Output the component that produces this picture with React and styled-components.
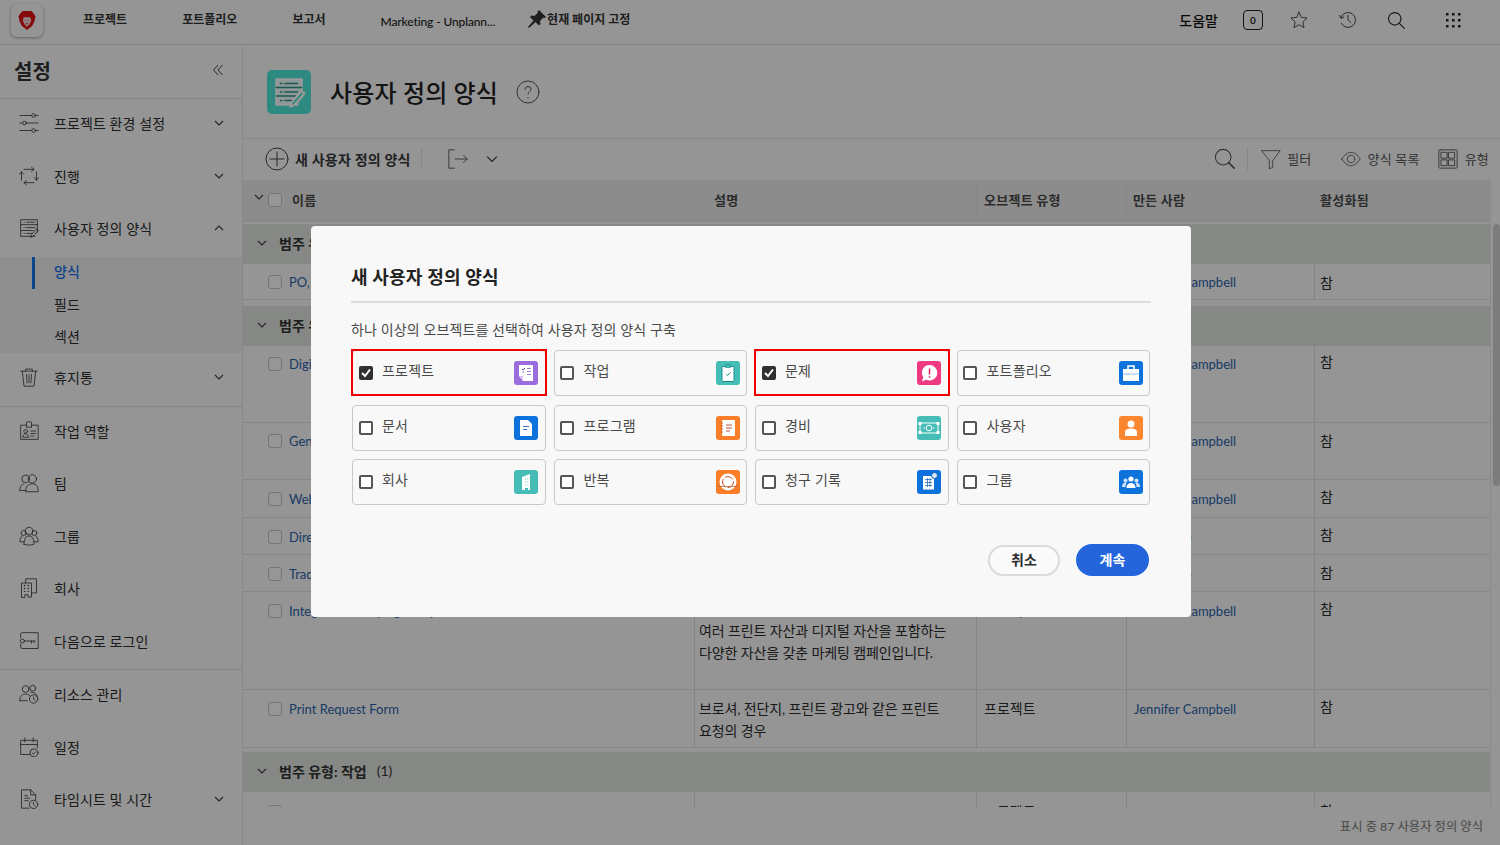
import styled, { createGlobalStyle } from 'styled-components';

const fontStack = "Lato, 'Noto Sans CJK KR', sans-serif";

const GlobalStyle = createGlobalStyle`
  html, body {
    margin: 0;
    height: 100%;
    overflow: hidden;
    background: #f8f8f8;
    color: #2c2c2c;
    font-family: ${fontStack};
  }
  * { box-sizing: border-box; }
`;

const Page = styled.div`
  height: 845px;
  display: flex;
  flex-direction: column;
  overflow: hidden;
`;

/* ---- top bar ---- */
const TopBar = styled.header`
  flex: 0 0 45px;
  display: flex;
  align-items: flex-start;
  padding-left: 11px;
  background: #f8f8f8;
  border-bottom: 1px solid #dcdcdc;
`;
const LogoBox = styled.div`
  width: 32px;
  height: 33px;
  margin-top: 4px;
  margin-right: 40px;
  display: flex;
  align-items: center;
  justify-content: center;
  background: #f8f8f8;
  border-radius: 6px;
  box-shadow: 0 1px 3px rgba(0, 0, 0, 0.35);
`;
const NavItem = styled.a`
  margin-top: ${(p) => p.$top || 11}px;
  margin-right: ${(p) => p.$gap || 55}px;
  font-size: 12px;
  line-height: 17px;
  font-weight: 700;
  color: #333;
  white-space: nowrap;
  display: flex;
  align-items: center;
`;
const NavText = styled(NavItem)`
  font-weight: 500;
  color: #222;
  letter-spacing: -0.12px;
`;
const TopRight = styled.div`
  margin-left: auto;
  display: flex;
  align-items: center;
  height: 40px;
  padding-right: 38px;
`;
const Help = styled.span`
  font-size: 14px;
  font-weight: 500;
  color: #111;
  margin-right: 25px;
`;
const Badge = styled.span`
  width: 20px;
  height: 20px;
  margin-right: 26px;
  border: 1px solid #222;
  border-radius: 4px;
  font-size: 10px;
  font-weight: 700;
  display: flex;
  align-items: center;
  justify-content: center;
`;
const TopIcon = styled.span`
  display: flex;
  margin-right: ${(p) => p.$gap}px;
`;

const Body = styled.div`
  flex: 1;
  min-height: 0;
  display: flex;
`;

/* ---- sidebar ---- */
const Sidebar = styled.aside`
  flex: 0 0 243px;
  border-right: 1px solid #e3e3e3;
  background: #f8f8f8;
  overflow: hidden;
`;
const SideHead = styled.div`
  height: 54px;
  padding: 0 18px 3px 14px;
  display: flex;
  align-items: center;
  justify-content: space-between;
  border-bottom: 1px solid #dfdfdf;
  h2 {
    margin: 0;
    font-size: 20px;
    font-weight: 700;
    color: #333;
  }
`;
const SideItem = styled.div`
  height: 52.5px;
  padding: 0 18px 4px 19px;
  display: flex;
  align-items: center;
  gap: 15px;
  font-size: 14px;
  color: #2c2c2c;
  letter-spacing: 0.1px;
  span { flex: 1; white-space: nowrap; }
`;
const SubList = styled.div`
  height: 96.500px;
  background: #eeeeee;
`;
const SubItem = styled.div`
  height: 32px;
  margin: 0 0 0.5px 32px;
  padding: 0 0 3px 19px;
  display: flex;
  align-items: center;
  font-size: 14px;
  letter-spacing: 0.1px;
  border-left: 3px solid ${(p) => (p.$active ? '#1473e6' : 'transparent')};
  color: ${(p) => (p.$active ? '#1473e6' : '#2c2c2c')};
  font-weight: ${(p) => (p.$active ? 500 : 400)};
`;
const SideRule = styled.div`
  height: 1px;
  background: #e0e0e0;
`;

/* ---- main column ---- */
const Main = styled.main`
  flex: 1;
  min-width: 0;
  display: flex;
  flex-direction: column;
`;
const PageHead = styled.div`
  flex: 0 0 94px;
  padding: 0 0 0 24px;
  display: flex;
  align-items: center;
  border-bottom: 1px solid #e3e3e3;
  h1 {
    margin: 0 18px 0 19px;
    font-size: 24px;
    font-weight: 500;
    color: #222;
    letter-spacing: 0.15px;
  }
`;
const FormBadge = styled.div`
  width: 44px;
  height: 44px;
  border-radius: 5px;
  background: #4ee6d8;
  display: flex;
  align-items: center;
  justify-content: center;
`;
const Toolbar = styled.div`
  flex: 0 0 41px;
  padding: 0 11px 2px 22px;
  display: flex;
  align-items: center;
`;
const NewButton = styled.div`
  display: flex;
  align-items: center;
  gap: 6px;
  font-size: 14px;
  font-weight: 700;
  color: #3a3a3a;
  letter-spacing: 0.22px;
`;
const ToolRule = styled.div`
  width: 1px;
  height: 22px;
  margin: ${(p) => p.$m};
  background: #dedede;
`;
const ToolRight = styled.div`
  margin-left: auto;
  display: flex;
  align-items: center;
`;
const ToolLabel = styled.div`
  display: flex;
  align-items: center;
  gap: ${(p) => p.$gap || 7}px;
  margin-right: ${(p) => p.$right || 0}px;
  font-size: 13px;
  letter-spacing: 0.2px;
  color: #555;
`;

/* ---- table ---- */
const TableWrap = styled.div`
  flex: 1;
  min-height: 0;
  display: flex;
  overflow: hidden;
`;
const Table = styled.div`
  flex: 1;
  min-width: 0;
`;
const Scrollbar = styled.div`
  flex: 0 0 10px;
  padding: 44px 0 0 2px;
  background: #f8f8f8;
  border-left: 1px solid #e8e8e8;
  i {
    display: block;
    width: 7px;
    height: 262px;
    border-radius: 4px;
    background: #cfcfcf;
  }
`;
const columns = '452px 282px 150px 188px 1fr';
const HeadRow = styled.div`
  height: 42px;
  margin-bottom: 2px;
  display: grid;
  grid-template-columns: ${columns};
  background: #e9e9e9;
  border-bottom: 1px solid #dedede;
`;
const HeadCell = styled.div`
  display: flex;
  align-items: center;
  padding-left: ${(p) => p.$pad}px;
  padding-bottom: 2px;
  font-size: 13px;
  font-weight: 700;
  letter-spacing: 0.25px;
  color: #4a4a4a;
  border-right: ${(p) => (p.$line ? '1px solid #e2e2e2' : 'none')};
`;
const GroupRow = styled.div`
  height: 40px;
  margin-top: ${(p) => p.$top || 0}px;
  padding: 0 0 3px 14px;
  display: flex;
  align-items: center;
  gap: 12px;
  background: #e0e3e0;
  font-size: 14px;
  font-weight: 700;
  color: #333;
  small { font-size: 14px; font-weight: 400; margin-left: -2px; }
`;
const Row = styled.div`
  height: ${(p) => p.$h}px;
  display: grid;
  grid-template-columns: ${columns};
  border-bottom: 1px solid #e2e2e2;
  font-size: 14px;
  color: #2c2c2c;
`;
const NameCell = styled.div`
  padding: ${(p) => p.$top}px 0 0 25px;
  display: flex;
  align-items: flex-start;
  gap: 7px;
  overflow: hidden;
  white-space: nowrap;
  border-right: 1px solid #dcdcdc;
`;
const RowCheck = styled.span`
  flex: none;
  width: 14px;
  height: 14px;
  border: 1px solid #c4c4c4;
  border-radius: 3px;
  background: #fafafa;
`;
const HeadCheck = styled(RowCheck)`
  margin: 0 10px 0 4px;
`;
const Link = styled.a`
  font-size: 13px;
  line-height: 18px;
  color: #2b63a8;
  white-space: nowrap;
`;
const NameLink = styled(Link)`
  margin-top: -2px;
`;
const Cell = styled.div`
  padding: ${(p) => p.$top}px 4px 0 ${(p) => p.$pad}px;
  line-height: 22px;
  letter-spacing: ${(p) => p.$track || 0}px;
  overflow: hidden;
  border-right: ${(p) => (p.$line ? '1px solid #dcdcdc' : 'none')};
`;
const Footer = styled.footer`
  flex: 0 0 38px;
  padding: 0 17px 0 0;
  display: flex;
  align-items: center;
  justify-content: flex-end;
  background: #f8f8f8;
  font-size: 12.3px;
  color: #777;
`;

/* ---- dialog ---- */
const Backdrop = styled.div`
  position: fixed;
  inset: 0;
  padding: 0 0 2px 2px;
  display: flex;
  align-items: center;
  justify-content: center;
  background: rgba(0, 0, 0, 0.4);
`;
const Dialog = styled.section`
  width: 880px;
  height: 391px;
  padding: 0 40px;
  background: #f8f8f8;
  border-radius: 4px;
`;
const DialogTitle = styled.h3`
  margin: 0;
  height: 77px;
  padding-top: 24px;
  display: flex;
  align-items: center;
  font-size: 18px;
  font-weight: 700;
  letter-spacing: 0.2px;
  color: #222;
  border-bottom: 2px solid #dcdcdc;
`;
const DialogHint = styled.p`
  margin: 17px 0 10px;
  font-size: 14px;
  line-height: 20px;
  letter-spacing: 0.12px;
  color: #4a4a4a;
`;
const TypeGrid = styled.div`
  margin: 0 1px;
  display: grid;
  grid-template-columns: repeat(4, 1fr);
  grid-auto-rows: 46px;
  column-gap: 8px;
  row-gap: 8.5px;
`;
const TypeCard = styled.label`
  position: relative;
  padding: 0 6.5px 0 5.5px;
  display: flex;
  align-items: center;
  background: #f8f8f8;
  border: 1px solid #c8c8c8;
  border-radius: 4px;
  &::after {
    content: ${(p) => (p.$marked ? "''" : 'none')};
    position: absolute;
    inset: -2px -2px -1px -2px;
    border: 2px solid #f00000;
  }
`;
const Box = styled.span`
  flex: none;
  width: 14px;
  height: 14px;
  display: flex;
  align-items: center;
  justify-content: center;
  border: 2px solid ${(p) => (p.$checked ? '#303030' : '#555')};
  border-radius: 2px;
  background: ${(p) => (p.$checked ? '#303030' : '#fff')};
`;
const TypeName = styled.span`
  flex: 1;
  margin: -6px 0 0 9.5px;
  font-size: 14px;
  color: #4a4a4a;
  letter-spacing: 0.2px;
`;
const TypeIcon = styled.span`
  flex: none;
  width: 24px;
  height: 24px;
  display: flex;
  border-radius: 3px;
  background: ${(p) => p.$bg};
`;
const DialogFoot = styled.div`
  margin-top: 39px;
  padding-right: 2px;
  display: flex;
  justify-content: flex-end;
  gap: 16px;
`;
const CancelButton = styled.button`
  width: 72px;
  height: 31px;
  margin-top: 1px;
  padding: 0 0 4px;
  background: #fafafa;
  border: 2px solid #dadada;
  border-radius: 16px;
  font: 700 14px ${fontStack};
  color: #2c2c2c;
`;
const ContinueButton = styled.button`
  width: 73px;
  height: 32px;
  padding: 0 0 2px;
  background: #2465dc;
  border: none;
  border-radius: 17px;
  font: 700 14px ${fontStack};
  color: #fff;
`;
const NudgeUp = styled.span`
  display: flex;
  margin-top: -6px;
`;
const Spacer = styled.span`
  width: ${(p) => p.$w}px;
`;

/* ---- drawings ---- */
function Line({ size = 20, color = '#3c3c3c', width = 1, children }) {
  return (
    <svg width={size} height={size} viewBox="0 0 24 24" fill="none" stroke={color} strokeWidth={width} strokeLinecap="round" strokeLinejoin="round" style={{ flex: 'none' }}>
      {children}
    </svg>
  );
}

function Chevron({ up, size = 10, color = '#3c3c3c' }) {
  return (
    <svg width={size} height={size} viewBox="0 0 10 10" fill="none" stroke={color} strokeWidth="1.1" style={{ flex: 'none' }}>
      <path d={up ? 'M1 7l4-4 4 4' : 'M1 3l4 4 4-4'} />
    </svg>
  );
}

const sideIcons = {
  sliders: (
    <>
      <path d="M1 3h14M20 3h3M1 12h3M9 12h14M1 21h14M20 21h3" />
      <circle cx="17.5" cy="3" r="2.2" /><circle cx="6.5" cy="12" r="2.2" /><circle cx="17.5" cy="21" r="2.2" />
    </>
  ),
  cycle: <path d="M6 4h12M15 1.5L18 4l-3 2.5M21 7v10M18.500 14l2.500 3 2.500-3M18 20H6M9 17.500L6 20l3 2.500M3 17V7M.5 10L3 7l2.500 3" />,
  form: (
    <>
      <path d="M19 22H2V2h20v15" />
      <path d="M2 8h20M2 15h15" />
      <path d="M6 5h.6M6 11.5h.6M6 18.5h.6M9 5h10M9 11.5h10M9 18.5h6" />
      <path d="M23 15l-6 7-3 1 1-3 6-7z" />
    </>
  ),
  trash: <path d="M2 5h20M8 5V2.5h8V5M4 5l2 18h12l2-18M9 9l.7 10M12 9v10M15 9l-.7 10" />,
  badge: (
    <>
      <path d="M9 5H2v17h21V5h-7" /><path d="M9 7V2a1 1 0 011-1h4a1 1 0 011 1v5z" />
      <circle cx="8" cy="12.5" r="2.2" /><path d="M4.5 19c0-5 7-5 7 0zM14 12h6M14 15h6M14 18h4" />
    </>
  ),
  team: (
    <>
      <circle cx="8" cy="7" r="4.5" /><circle cx="16" cy="7" r="5" />
      <path d="M1 21c0-5 2-7 5-8M8 22c0-6 3-9 8-9s7 3 7 9z" /><path d="M1 21h7" />
    </>
  ),
  group: (
    <>
      <circle cx="12" cy="6" r="4.5" /><circle cx="5.5" cy="8.5" r="3" /><circle cx="18.5" cy="8.5" r="3" />
      <path d="M6 22c0-7 2-10 6-10s6 3 6 10c-3 1.200-9 1.200-12 0zM6 19H1c0-4 1-6 3-7M18 19h5c0-4-1-6-3-7" />
    </>
  ),
  building: (
    <>
      <path d="M3 23V6h12v17h-4v-3H7v3zM8 6V1h13v17h-6" />
      <path d="M6.500 9h.3M11 9h.3M6.500 12.500h.3M11 12.500h.3M6.500 16h.3M11 16h.3" strokeWidth="1.6" />
    </>
  ),
  key: (
    <>
      <path d="M2 8V4a2 2 0 012-2h19v19H4a2 2 0 01-2-2v-3" />
      <circle cx="4" cy="12" r="2.500" /><path d="M6.500 12H19M15 12v2.500M18 12v2" />
    </>
  ),
  resource: (
    <>
      <circle cx="8" cy="6" r="4" /><circle cx="16.500" cy="5" r="3.500" />
      <path d="M1 20c0-6 3-8 7-8 2 0 4 .6 5 2M10 20H1M14 10c4 0 7 1 8 5" />
      <circle cx="17.500" cy="18" r="5" /><path d="M17.500 15.500V18l2 2" />
    </>
  ),
  calendar: (
    <>
      <path d="M13 21H2V4h20v9M2 9h20M7 1v5M17 1v5" />
      <circle cx="18" cy="19" r="4.800" /><path d="M15.800 19l1.600 1.600 2.800-3" />
    </>
  ),
  timesheet: (
    <>
      <path d="M12 23H3V1h11l6 6v6M14 1v6h6M7 8h3M7 11h6M7 14h4" />
      <circle cx="17.500" cy="18.500" r="5" /><path d="M17.500 16v2.500l2 2" />
    </>
  ),
  folder: <path d="M1 6h22v17H1z" />,
};

const Lion = () => (
  <svg width="18" height="19" viewBox="0 0 16 18">
    <path d="M4 0h8l2 2 2 3-1 5-2 4-5 4-5-4-2-4-1-5 2-3z" fill="#e01010" />
    <path d="M5 6h6l1 3-2 4-2 2-2-2-2-4z" fill="#f4dede" />
    <path d="M6.500 9h.8M8.700 9h.8M7 12h2" stroke="#c01010" strokeWidth="1" />
  </svg>
);

const glyphs = {
  project: (
    <>
      <path d="M5 4h14v16H9l-4-5z" fill="#fff" />
      <path d="M5 15h4v5z" fill="#d9c4f3" />
      <path d="M8 8l1 1 2-2" stroke="#5b3aa8" fill="none" />
      <path d="M13 7.500h4M13 10.500h4M13 13.500h4M8 11h2" stroke="#9c83d0" fill="none" />
    </>
  ),
  task: (
    <>
      <rect x="6" y="5.500" width="12" height="15" rx="1" fill="#fff" stroke="#1f8f88" />
      <path d="M9.500 3.500h5v3h-5z" fill="#46bdb6" stroke="#1f8f88" strokeWidth=".7" />
      <path d="M10 13l1.500 1.500 3-3" stroke="#1f8f88" fill="none" />
    </>
  ),
  issue: (
    <>
      <path d="M12.500 4a7.800 7.800 0 110 15.600c-1.200 0-2.300-.3-3.300-.8L5 20.500l1.300-4.200A7.800 7.800 0 0112.500 4z" fill="#fff" />
      <path d="M12.500 7.500v6M12.500 15.200v1.500" stroke="#e0245e" strokeWidth="1.500" />
    </>
  ),
  portfolio: (
    <>
      <path d="M4 8h16v12H4z" fill="#fff" />
      <path d="M9 8V5h6v3" stroke="#fff" strokeWidth="1.600" fill="none" />
      <path d="M4 13h16M9 13v1.500M15 13v1.500" stroke="#9cc3ee" fill="none" />
    </>
  ),
  doc: (
    <>
      <path d="M6 4h8l4 4v12H6z" fill="#fff" />
      <path d="M9 10.500h6M9 13.500h4" stroke="#3a72c0" fill="none" />
    </>
  ),
  program: (
    <>
      <rect x="6" y="4" width="13" height="16" rx="1" fill="#fff" />
      <path d="M5 7h2M5 10h2M5 13h2M5 16h2" stroke="#c96018" fill="none" />
      <path d="M10 9h6M10 12h6M10 15h4" stroke="#c0503a" fill="none" />
    </>
  ),
  expense: (
    <>
      <rect x="3" y="7" width="18" height="10" fill="none" stroke="#fff" />
      <rect x="1.500" y="6" width="3" height="3" fill="#fff" /><rect x="19.500" y="6" width="3" height="3" fill="#fff" />
      <rect x="1.500" y="15" width="3" height="3" fill="#fff" /><rect x="19.500" y="15" width="3" height="3" fill="#fff" />
      <circle cx="12" cy="12" r="2.800" fill="none" stroke="#fff" />
      <path d="M6.500 12h1.500M16 12h1.500" stroke="#fff" />
    </>
  ),
  user: (
    <>
      <circle cx="12" cy="8" r="3.500" fill="#fff" />
      <path d="M6 20v-4c0-2 2-3.500 6-3.500s6 1.500 6 3.500v4z" fill="#fff" />
    </>
  ),
  company: (
    <>
      <path d="M8 7l8-3v16h-2v-2h-3v2H8z" fill="#fff" />
      <path d="M11 9h.8M13.500 9h.8M11 12h.8M13.500 12h.8M11 15h.8M13.500 15h.8" stroke="#46bdb6" fill="none" />
    </>
  ),
  iteration: (
    <>
      <circle cx="12" cy="12" r="8.500" fill="#fff" />
      <circle cx="12" cy="12" r="5.500" fill="none" stroke="#c0502a" strokeDasharray="9 2" />
      <path d="M2 16.500h20" stroke="#b0562a" strokeWidth=".7" />
    </>
  ),
  billing: (
    <>
      <path d="M6 6h11v14l-1.500-1-1.500 1-1.500-1-1.500 1-1.500-1-1.500 1L6 19z" fill="#fff" />
      <path d="M8 9.500h7M8 12.500h7M8 15.500h7M10.500 8v9M13 8v9" stroke="#2a70c8" strokeWidth=".8" fill="none" />
      <circle cx="17.500" cy="5.500" r="3" fill="#dce8f6" stroke="#0c5cb8" />
    </>
  ),
  people: (
    <>
      <circle cx="12" cy="9" r="2.600" fill="#fff" /><circle cx="6.500" cy="10.500" r="2" fill="#cfe2f7" /><circle cx="17.500" cy="10.500" r="2" fill="#cfe2f7" />
      <path d="M7.500 18c0-3.500 2-5 4.500-5s4.500 1.500 4.500 5z" fill="#fff" />
      <path d="M3 17c0-3 1.500-4.500 3.500-4.500 1 0 1.500.3 1.500.3-1 1-1.500 2.500-1.500 4.200zM21 17c0-3-1.500-4.500-3.500-4.500-1 0-1.500.3-1.500.3 1 1 1.500 2.500 1.500 4.200z" fill="#cfe2f7" />
    </>
  ),
};

const sideTop = [
  { icon: 'sliders', label: '프로젝트 환경 설정', chevron: true },
  { icon: 'cycle', label: '진행', chevron: true },
  { icon: 'form', label: '사용자 정의 양식', chevron: true, up: true },
];
const sideMiddle = [
  { icon: 'badge', label: '작업 역할' },
  { icon: 'team', label: '팀' },
  { icon: 'group', label: '그룹' },
  { icon: 'building', label: '회사' },
  { icon: 'key', label: '다음으로 로그인' },
];
const sideBottom = [
  { icon: 'resource', label: '리소스 관리' },
  { icon: 'calendar', label: '일정' },
  { icon: 'timesheet', label: '타임시트 및 시간', chevron: true },
  { icon: 'folder', label: '' },
];

const types = [
  { label: '프로젝트', glyph: 'project', bg: '#9b6cdd', checked: true },
  { label: '작업', glyph: 'task', bg: '#45bdb6' },
  { label: '문제', glyph: 'issue', bg: '#ee3a80', checked: true },
  { label: '포트폴리오', glyph: 'portfolio', bg: '#0e72dc' },
  { label: '문서', glyph: 'doc', bg: '#0e72dc' },
  { label: '프로그램', glyph: 'program', bg: '#fa7d28' },
  { label: '경비', glyph: 'expense', bg: '#45bdb6' },
  { label: '사용자', glyph: 'user', bg: '#fa8630' },
  { label: '회사', glyph: 'company', bg: '#45bdb6' },
  { label: '반복', glyph: 'iteration', bg: '#fa7d28' },
  { label: '청구 기록', glyph: 'billing', bg: '#0e72dc' },
  { label: '그룹', glyph: 'people', bg: '#0e72dc' },
];

const groupA = [
  { h: 77, top: 11, act: 5, name: 'Digital Asset Request', by: 'Jennifer Campbell' },
  { h: 57, top: 11, act: 7, name: 'General Creative Request', by: 'Jennifer Campbell' },
  { h: 38, top: 12, act: 6, name: 'Web Page Request', by: 'Jennifer Campbell' },
  { h: 37, top: 12, act: 6, name: 'Direct Mail Request', by: 'Sam Rizzo' },
  { h: 37, top: 12, act: 7, name: 'Trade Show Request', by: 'Sam Rizzo' },
  {
    h: 98,
    top: 12,
    act: 6,
    descTop: 6,
    name: 'Integrated Campaign Request',
    by: 'Jennifer Campbell',
    desc: ['인쇄물, 웹 페이지, 소셜 미디어 광고 등', '여러 프린트 자산과 디지털 자산을 포함하는', '다양한 자산을 갖춘 마케팅 캠페인입니다.'],
  },
  { h: 58, top: 12, act: 6, descTop: 8, name: 'Print Request Form', by: 'Jennifer Campbell', desc: ['브로셔, 전단지, 프린트 광고와 같은 프린트', '요청의 경우'] },
];

function SideRow({ item }) {
  return (
    <SideItem>
      <Line size={20}>{sideIcons[item.icon]}</Line>
      <span>{item.label}</span>
      {item.chevron && <Chevron up={item.up} />}
    </SideItem>
  );
}

function DataRow({ row }) {
  return (
    <Row $h={row.h}>
      <NameCell $top={row.top}>
        <RowCheck />
        <NameLink>{row.name}</NameLink>
      </NameCell>
      <Cell $pad={4} $top={row.descTop || 8} $track={-0.12} $line>
        {(row.desc || []).map((text) => (
          <div key={text}>{text}</div>
        ))}
      </Cell>
      <Cell $pad={7} $top={row.top - 4} $line>
        프로젝트
      </Cell>
      <Cell $pad={7} $top={row.top - 4} $line>
        <Link>{row.by}</Link>
      </Cell>
      <Cell $pad={5} $top={row.act}>
        참
      </Cell>
    </Row>
  );
}

export default function App() {
  return (
    <>
      <GlobalStyle />
      <Page>
        <TopBar>
          <LogoBox>
            <Lion />
          </LogoBox>
          <NavItem>프로젝트</NavItem>
          <NavItem>포트폴리오</NavItem>
          <NavItem>보고서</NavItem>
          <NavText $top={13} $gap={32}>
            Marketing - Unplann...
          </NavText>
          <NavItem $top={9}>
            <svg width="20" height="20" viewBox="0 0 20 20">
              <path d="M12 1l7 7-1.500 1-1-.5-3.500 3.500.5 3-1.500 1.500-3.500-3.500L2 19l-1-1 5.500-6.500L3 8l1.500-1.500 3 .5L11 3.500l-.5-1z" fill="#333" />
            </svg>
            현재 페이지 고정
          </NavItem>
          <TopRight>
            <Help>도움말</Help>
            <Badge>0</Badge>
            <TopIcon $gap={29}>
              <Line size={20} width={1.1} color="#444">
                <path d="M12 2.500l2.900 6.300 6.800.8-5 4.700 1.300 6.800-6-3.400-6 3.400 1.300-6.800-5-4.700 6.800-.8z" />
              </Line>
            </TopIcon>
            <TopIcon $gap={28}>
              <Line size={20} width={1.2} color="#444">
                <path d="M3.500 9a9 9 0 11.500 7M2 6.500L3.500 10 7 8.500M12 6.500V12l3.500 3" />
              </Line>
            </TopIcon>
            <TopIcon $gap={38}>
              <Line size={20} width={1.5} color="#333">
                <circle cx="10.500" cy="10.500" r="7.500" />
                <path d="M16 16l6 6" />
              </Line>
            </TopIcon>
            <svg width="18" height="18" viewBox="0 0 18 18" fill="#222">
              {[2, 8, 14].flatMap((y) => [2, 8, 14].map((x) => <rect key={`${x}-${y}`} x={x} y={y} width="2.500" height="2.500" />))}
            </svg>
          </TopRight>
        </TopBar>
        <Body>
          <Sidebar>
            <SideHead>
              <h2>설정</h2>
              <svg width="12" height="12" viewBox="0 0 12 12" fill="none" stroke="#444" strokeWidth="1">
                <path d="M6 1L1.500 6 6 11M10.500 1L6 6l4.500 5" />
              </svg>
            </SideHead>
            {sideTop.map((item) => (
              <SideRow key={item.label} item={item} />
            ))}
            <SubList>
              <SubItem $active>양식</SubItem>
              <SubItem>필드</SubItem>
              <SubItem>섹션</SubItem>
            </SubList>
            <SideRow item={{ icon: 'trash', label: '휴지통', chevron: true }} />
            <SideRule />
            {sideMiddle.map((item) => (
              <SideRow key={item.label} item={item} />
            ))}
            <SideRule />
            {sideBottom.map((item) => (
              <SideRow key={item.icon} item={item} />
            ))}
          </Sidebar>
          <Main>
            <PageHead>
              <FormBadge>
                <Line size={34} color="#fff" width={1.5}>
                  <path d="M18 21H3V3h18v13" fill="#fff" fillOpacity=".9" />
                  <path d="M3 8.800h18M3 14.800h14M6 6h1M6 12h1M6 18h1M9 6h9M9 12h9M9 18h5" stroke="#2f8f86" strokeWidth="1" />
                  <path d="M23 13l-7 8-3 1.500.8-3.200 7-8z" stroke="#fff" fill="#4ee6d8" />
                </Line>
              </FormBadge>
              <h1>사용자 정의 양식</h1>
              <Line size={24} color="#555" width={1}>
                <circle cx="12" cy="12" r="11" />
                <path d="M9 9.500a3 3 0 116 0c0 2-3 2.200-3 4.500M12 17.500v.5" />
              </Line>
            </PageHead>
            <Toolbar>
              <NewButton>
                <Line size={24} color="#444" width={1}>
                  <circle cx="12" cy="12" r="11" />
                  <path d="M12 5v14M5 12h14" />
                </Line>
                새 사용자 정의 양식
              </NewButton>
              <ToolRule $m="0 25px 0 10px" />
              <Line size={22} color="#555" width={1}>
                <path d="M8 2H2v20h6M9 12h13M18 8l4 4-4 4" />
              </Line>
              <Spacer $w={17} />
              <Chevron size={12} />
              <ToolRight>
                <Line size={22} color="#555" width={1.1}>
                  <circle cx="10" cy="10" r="8.500" />
                  <path d="M16 16l6 6" strokeWidth="1.800" />
                </Line>
                <ToolRule $m="0 13px 0 11px" />
                <ToolLabel $gap={6} $right={29}>
                  <Line size={20} color="#555" width={1}>
                    <path d="M1 2h22l-9 12v8l-4 2V14z" />
                  </Line>
                  필터
                </ToolLabel>
                <ToolLabel $gap={7} $right={18}>
                  <Line size={20} color="#555" width={1}>
                    <path d="M1 12c3-5 7-8 11-8s8 3 11 8c-3 5-7 8-11 8S4 17 1 12z" />
                    <circle cx="12" cy="12" r="4.500" />
                  </Line>
                  양식 목록
                </ToolLabel>
                <ToolLabel $gap={7}>
                  <Line size={20} color="#555" width={1.1}>
                    <rect x="1" y="1" width="22" height="22" rx="1.500" />
                    <rect x="4" y="4" width="7" height="7" /><rect x="13" y="4" width="7" height="7" />
                    <rect x="4" y="13" width="7" height="7" /><rect x="13" y="13" width="7" height="7" />
                  </Line>
                  유형
                </ToolLabel>
              </ToolRight>
            </Toolbar>
            <TableWrap>
              <Table>
                <HeadRow>
                  <HeadCell $pad={11}>
                    <NudgeUp>
                      <Chevron size={10} />
                    </NudgeUp>
                    <HeadCheck />
                    이름
                  </HeadCell>
                  <HeadCell $pad={19} $line>
                    설명
                  </HeadCell>
                  <HeadCell $pad={7} $line>
                    오브젝트 유형
                  </HeadCell>
                  <HeadCell $pad={6} $line>
                    만든 사람
                  </HeadCell>
                  <HeadCell $pad={5}>활성화됨</HeadCell>
                </HeadRow>
                <GroupRow>
                  <Chevron />
                  범주 유형: 견적 <small>(1)</small>
                </GroupRow>
                <DataRow row={{ h: 36, top: 11, act: 8, name: 'PO, SOW Request', by: 'Jennifer Campbell' }} />
                <GroupRow $top={6}>
                  <Chevron />
                  범주 유형: 프로젝트 <small>(7)</small>
                </GroupRow>
                {groupA.map((row) => (
                  <DataRow key={row.name} row={row} />
                ))}
                <GroupRow $top={4}>
                  <Chevron />
                  범주 유형: 작업 <small>(1)</small>
                </GroupRow>
                <DataRow row={{ h: 40, top: 13, act: 8, name: 'Portfolio Info', by: 'Jennifer Campbell' }} />
              </Table>
              <Scrollbar>
                <i />
              </Scrollbar>
            </TableWrap>
            <Footer>표시 중 87 사용자 정의 양식</Footer>
          </Main>
        </Body>
      </Page>
      <Backdrop>
        <Dialog>
          <DialogTitle>새 사용자 정의 양식</DialogTitle>
          <DialogHint>하나 이상의 오브젝트를 선택하여 사용자 정의 양식 구축</DialogHint>
          <TypeGrid>
            {types.map((type) => (
              <TypeCard key={type.label} $marked={type.checked}>
                <Box $checked={type.checked}>
                  {type.checked && (
                    <svg width="10" height="10" viewBox="0 0 10 10" fill="none" stroke="#fff" strokeWidth="2">
                      <path d="M1 5l3 3 5-6.500" />
                    </svg>
                  )}
                </Box>
                <TypeName>{type.label}</TypeName>
                <TypeIcon $bg={type.bg}>
                  <svg width="24" height="24" viewBox="0 0 24 24">
                    {glyphs[type.glyph]}
                  </svg>
                </TypeIcon>
              </TypeCard>
            ))}
          </TypeGrid>
          <DialogFoot>
            <CancelButton>취소</CancelButton>
            <ContinueButton>계속</ContinueButton>
          </DialogFoot>
        </Dialog>
      </Backdrop>
    </>
  );
}
